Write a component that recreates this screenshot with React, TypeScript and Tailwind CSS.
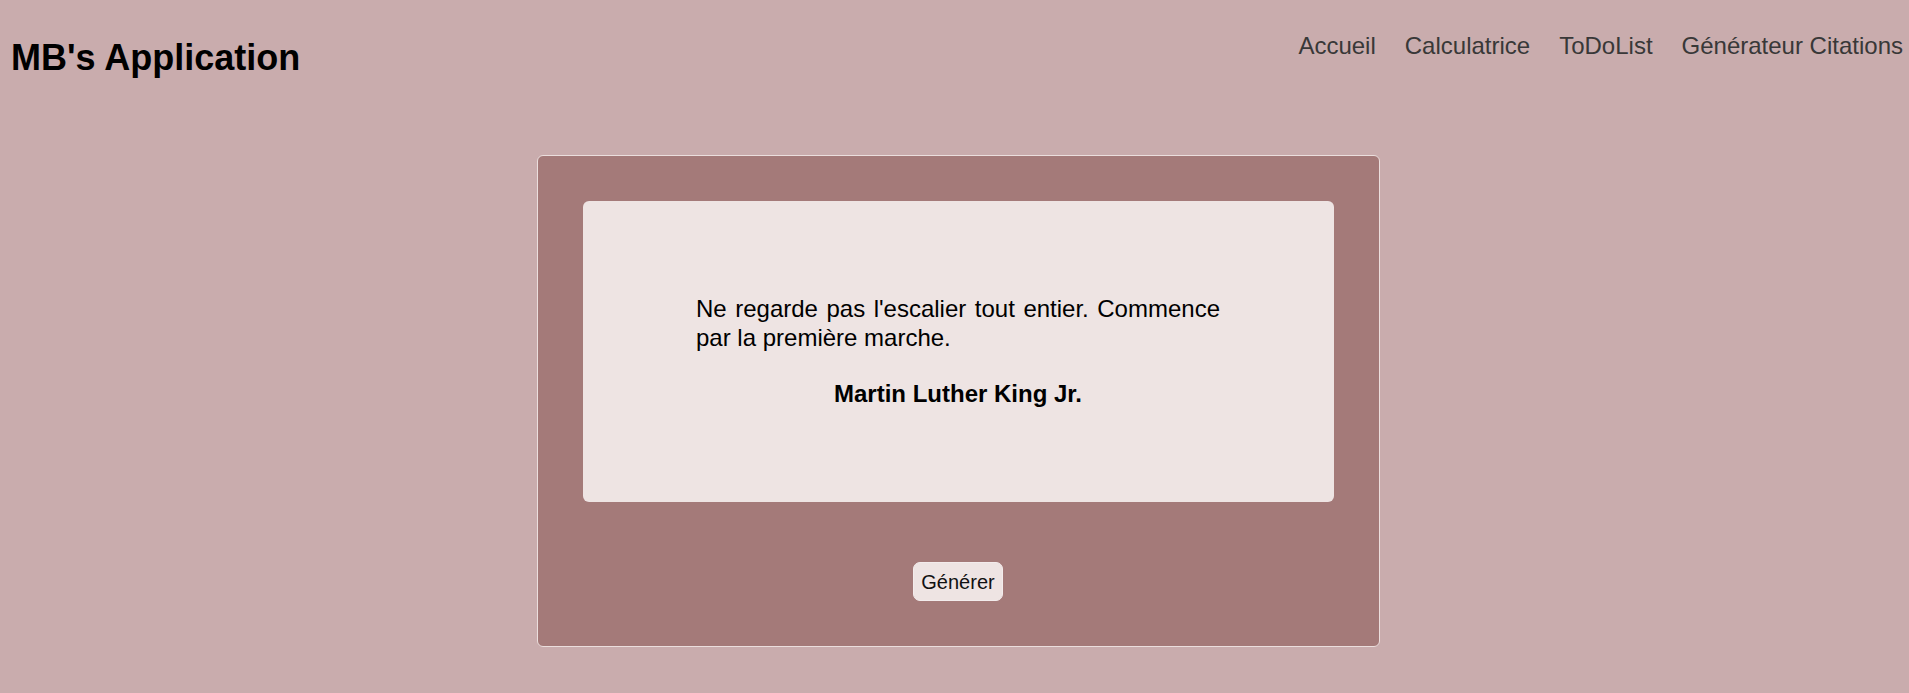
export default function App() {
  return (
    <div className="min-h-screen bg-[#c9acad] font-['Liberation_Sans',Arial,sans-serif] text-black">
      <header className="flex items-start justify-between pl-[11px] pr-[6px]">
        <h1 className="mt-[37px] text-[36px] font-bold leading-[41px]">MB's Application</h1>
        <nav className="mt-[32px] flex gap-[29px] text-[24px] leading-[28px] text-[#383838]">
          <a href="#">Accueil</a>
          <a href="#">Calculatrice</a>
          <a href="#">ToDoList</a>
          <a href="#">Générateur Citations</a>
        </nav>
      </header>

      <main className="mt-[77px] flex justify-center pl-[7px]">
        <div className="flex w-[843px] flex-col items-center rounded-[6px] border border-[#ebdedd] bg-[#a47a79] p-[45px]">
          <div className="flex h-[301px] w-full flex-col items-center justify-center rounded-[6px] bg-[#eee4e3] pb-[2px]">
            <p className="w-[524px] text-justify text-[24px] leading-[29px]">
              Ne regarde pas l'escalier tout entier. Commence par la première marche.
            </p>
            <p className="mt-[27px] text-[24px] font-bold leading-[29px]">Martin Luther King Jr.</p>
          </div>
          <button className="mt-[60px] h-[39px] w-[90px] rounded-[7px] border border-[#f3ecec] bg-[#eee4e3] text-[20px] text-[#111111]">
            Générer
          </button>
        </div>
      </main>
    </div>
  );
}
